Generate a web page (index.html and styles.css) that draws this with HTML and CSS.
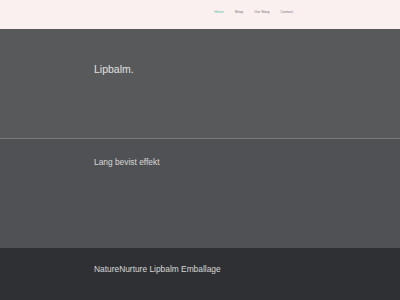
FILE: index.html
```html
<!DOCTYPE html>
<html lang="da">
<head>
  <meta charset="UTF-8">
  <meta name="viewport" content="width=device-width, initial-scale=1">
  <title>Lipbalm</title>
  <link rel="stylesheet" href="styles.css">
</head>
<body>
  <!-- Topbar -->
  <header class="topbar">
    <nav class="menu">
      <a href="#" class="active">Home</a>
      <a href="#">Shop</a>
      <a href="#">Our Story</a>
      <a href="#">Contact</a>
    </nav>
  </header>

  <section class="band hero">
    <h1>Lipbalm.</h1>
  </section>

  <section class="band effect">
    <h2>Lang bevist effekt</h2>
  </section>

  <section class="band pack">
    <h2>NatureNurture Lipbalm Emballage</h2>
  </section>
</body>
</html>
```

FILE: styles.css
```css
:root {
  --pink: #faf0ef;
  --band1: #58595b;
  --band2: #505154;
  --band3: #2e3033;
  --text: #d9d9d9;
  --accent: #5cc2a2;
}
* {box-sizing:border-box;margin:0;padding:0;}
body {font-family:"Liberation Sans",Arial,sans-serif;background:var(--band3);color:var(--text);}

.topbar {height:29px;background:var(--pink);display:flex;justify-content:flex-end;align-items:center;padding:0 107px 0 0;}
.menu {display:flex;gap:11px;margin-top:-3px;}
.menu a {font-size:3.6px;line-height:1;color:#6f6f6f;text-decoration:none;}
.menu a.active {color:var(--accent);}

.band {padding-left:94px;}
.band h1,.band h2 {font-weight:400;line-height:1;}
.band h1 {font-size:10.5px;color:#e2e2e2;}
.band h2 {font-size:8.4px;}

.hero {height:109px;background:var(--band1);padding-top:34.5px;}
.effect {height:110px;background:var(--band2);border-top:1px solid #7c7c7e;padding-top:19px;}
.pack {height:52px;background:var(--band3);padding-top:17.2px;}
```
